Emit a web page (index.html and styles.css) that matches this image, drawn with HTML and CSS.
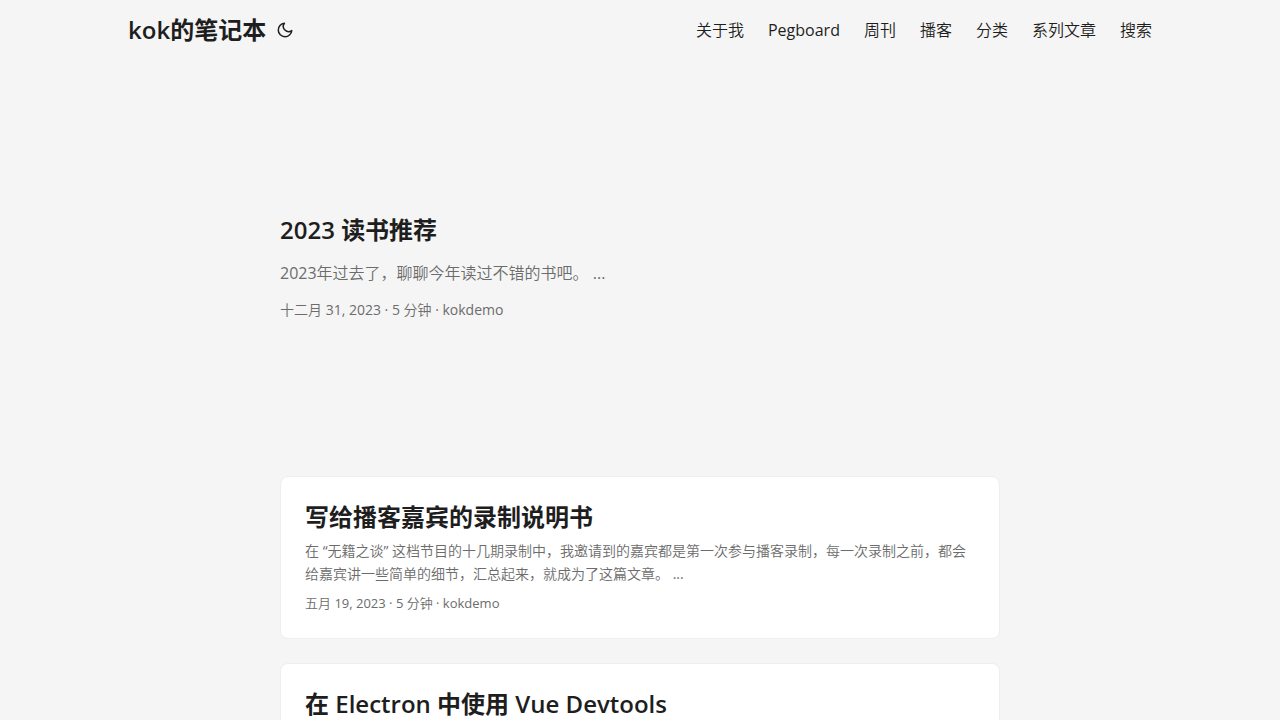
FILE: index.html
```html
<!DOCTYPE html>
<html lang="zh">
<head>
  <meta charset="UTF-8">
  <meta name="viewport" content="width=device-width, initial-scale=1">
  <title>kok的笔记本</title>
  <link rel="stylesheet" href="styles.css">
</head>
<body>
  <header class="header">
    <nav class="nav">
      <div class="logo">
        <a href="/" accesskey="h" title="kok的笔记本 (Alt + H)">kok的笔记本</a>
        <button id="theme-toggle" class="theme-toggle" type="button" aria-label="切换主题">
          <svg width="18" height="18" viewBox="0 0 24 24" fill="none" stroke="currentColor" stroke-width="2" stroke-linecap="round" stroke-linejoin="round">
            <path d="M21 12.79A9 9 0 1 1 11.21 3 7 7 0 0 0 21 12.79z"></path>
          </svg>
        </button>
      </div>
      <ul class="menu">
        <li><a href="/about/">关于我</a></li>
        <li><a href="/pegboard/">Pegboard</a></li>
        <li><a href="/weekly/">周刊</a></li>
        <li><a href="/podcast/">播客</a></li>
        <li><a href="/categories/">分类</a></li>
        <li><a href="/series/">系列文章</a></li>
        <li><a href="/search/">搜索</a></li>
      </ul>
    </nav>
  </header>

  <main class="main">
    <article class="first-entry">
      <h2 class="entry-title"><a href="/posts/2023-books/">2023 读书推荐</a></h2>
      <p class="entry-content">2023年过去了，聊聊今年读过不错的书吧。 ...</p>
      <footer class="entry-footer">十二月 31, 2023 · 5 分钟 · kokdemo</footer>
    </article>

    <article class="post-entry">
      <h2 class="entry-title"><a href="/posts/podcast-guide/">写给播客嘉宾的录制说明书</a></h2>
      <p class="entry-content">在 “无籍之谈” 这档节目的十几期录制中，我邀请到的嘉宾都是第一次参与播客录制，每一次录制之前，都会给嘉宾讲一些简单的细节，汇总起来，就成为了这篇文章。 ...</p>
      <footer class="entry-footer">五月 19, 2023 · 5 分钟 · kokdemo</footer>
    </article>

    <article class="post-entry">
      <h2 class="entry-title"><a href="/posts/electron-vue-devtools/">在 Electron 中使用 Vue Devtools</a></h2>
    </article>
  </main>
</body>
</html>
```
FILE: styles.css
```css
:root {
  --gap: 24px;
  --nav-width: 1024px;
  --main-width: 720px;
  --header-height: 60px;
  --radius: 8px;
  --theme: #f5f5f5;
  --entry: #fff;
  --primary: #1e1e1e;
  --secondary: #6c6c6c;
  --border: #eee;
}

* {
  box-sizing: border-box;
  margin: 0;
  padding: 0;
}

body {
  font-family: "Open Sans", "Noto Sans CJK SC DemiLight", "Noto Sans CJK SC", sans-serif;
  font-size: 16px;
  line-height: 26px;
  color: var(--primary);
  background: var(--theme);
}

a {
  color: inherit;
  text-decoration: none;
}

.nav {
  display: flex;
  justify-content: space-between;
  max-width: calc(var(--nav-width) + var(--gap) * 2);
  margin: 0 auto;
  padding: 0 var(--gap);
  line-height: var(--header-height);
}

.logo {
  display: flex;
  align-items: center;
  gap: 10px;
  font-family: "Open Sans", "Noto Sans CJK SC", sans-serif;
  font-size: 24px;
  font-weight: 600;
}

.theme-toggle {
  display: flex;
  border: none;
  background: none;
  color: inherit;
  cursor: pointer;
}

.menu {
  display: flex;
  gap: var(--gap);
  list-style: none;
}

.main {
  max-width: calc(var(--main-width) + var(--gap) * 2);
  margin: 0 auto;
  padding: var(--gap);
}

.first-entry {
  display: flex;
  flex-direction: column;
  justify-content: center;
  min-height: 318px;
  margin: var(--gap) 0 50px;
}

.post-entry {
  margin-bottom: var(--gap);
  padding: var(--gap);
  background: var(--entry);
  border: 1px solid var(--border);
  border-radius: var(--radius);
}

.entry-title {
  font-family: "Open Sans", "Noto Sans CJK SC", sans-serif;
  font-size: 24px;
  font-weight: 600;
  line-height: 32px;
}

.entry-content {
  margin: 6px 0 8px;
  color: var(--secondary);
  font-size: 14px;
  line-height: 23px;
}

.entry-footer {
  color: var(--secondary);
  font-size: 13px;
  line-height: 21px;
}

.first-entry .entry-content {
  margin: 14px 0;
  font-size: 16px;
  line-height: 26px;
}

.first-entry .entry-footer {
  font-size: 14px;
  line-height: 20px;
}
```
